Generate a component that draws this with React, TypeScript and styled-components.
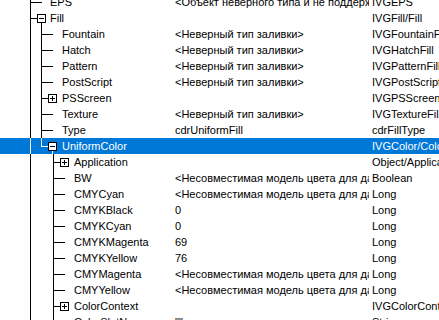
import { styled, createGlobalStyle } from "styled-components";

const GlobalStyle = createGlobalStyle`
  html, body {
    margin: 0;
    padding: 0;
    background: #ffffff;
  }
  body {
    font-family: "Liberation Sans", Arial, sans-serif;
    font-size: 11px;
  }
`;

type NodeKind = "leaf" | "open" | "closed";

type Row = {
  name: string;
  value: string;
  type: string;
  level: 1 | 2 | 3;
  node: NodeKind;
  last?: boolean;
  rails: number[];
  selected?: boolean;
};

const BAD_FILL = "<Неверный тип заливки>";
const BAD_MODEL = "<Несовместимая модель цвета для данной операции>";

const rows: Row[] = [
  { name: "EPS", value: "<Объект неверного типа и не поддерживается>", type: "IVGEPS", level: 1, node: "leaf", rails: [] },
  { name: "Fill", value: "", type: "IVGFill/Fill", level: 1, node: "open", rails: [] },
  { name: "Fountain", value: BAD_FILL, type: "IVGFountainFill", level: 2, node: "leaf", rails: [1] },
  { name: "Hatch", value: BAD_FILL, type: "IVGHatchFill", level: 2, node: "leaf", rails: [1] },
  { name: "Pattern", value: BAD_FILL, type: "IVGPatternFill", level: 2, node: "leaf", rails: [1] },
  { name: "PostScript", value: BAD_FILL, type: "IVGPostScriptFill", level: 2, node: "leaf", rails: [1] },
  { name: "PSScreen", value: "", type: "IVGPSScreen", level: 2, node: "closed", rails: [1] },
  { name: "Texture", value: BAD_FILL, type: "IVGTextureFill", level: 2, node: "leaf", rails: [1] },
  { name: "Type", value: "cdrUniformFill", type: "cdrFillType", level: 2, node: "leaf", rails: [1] },
  { name: "UniformColor", value: "", type: "IVGColor/Color", level: 2, node: "open", last: true, rails: [1], selected: true },
  { name: "Application", value: "", type: "Object/Application", level: 3, node: "closed", rails: [1] },
  { name: "BW", value: BAD_MODEL, type: "Boolean", level: 3, node: "leaf", rails: [1] },
  { name: "CMYCyan", value: BAD_MODEL, type: "Long", level: 3, node: "leaf", rails: [1] },
  { name: "CMYKBlack", value: "0", type: "Long", level: 3, node: "leaf", rails: [1] },
  { name: "CMYKCyan", value: "0", type: "Long", level: 3, node: "leaf", rails: [1] },
  { name: "CMYKMagenta", value: "69", type: "Long", level: 3, node: "leaf", rails: [1] },
  { name: "CMYKYellow", value: "76", type: "Long", level: 3, node: "leaf", rails: [1] },
  { name: "CMYMagenta", value: BAD_MODEL, type: "Long", level: 3, node: "leaf", rails: [1] },
  { name: "CMYYellow", value: BAD_MODEL, type: "Long", level: 3, node: "leaf", rails: [1] },
  { name: "ColorContext", value: "", type: "IVGColorContext", level: 3, node: "closed", rails: [1] },
  { name: "ColorSlotName", value: '""', type: "String", level: 3, node: "leaf", rails: [1] },
];

// pixel column of the vertical tree line for each level
const LINE_X: Record<number, number> = { 1: 30, 2: 41, 3: 53 };

const Viewport = styled.div`
  width: 439px;
  height: 320px;
  overflow: hidden;
  background: #ffffff;
`;

const List = styled.div`
  display: flex;
  flex-direction: column;
  margin-top: -6px;
`;

const StyledRow = styled.div<{ $selected?: boolean }>`
  display: flex;
  height: 16px;
  line-height: 16px;
  white-space: nowrap;
  background: ${({ $selected }) => ($selected ? "#0078d7" : "transparent")};
  color: ${({ $selected }) => ($selected ? "#ffffff" : "#000000")};
`;

const NameCell = styled.div`
  flex: none;
  width: 172px;
  display: flex;
  overflow: hidden;
`;

const Connectors = styled.svg`
  flex: none;
  display: block;
`;

const Label = styled.span`
  margin-left: 2px;
`;

const ValueCell = styled.div`
  flex: none;
  width: 194px;
  padding-left: 3px;
  overflow: hidden;
`;

const TypeCell = styled.div`
  flex: 1;
  padding-left: 3px;
  overflow: hidden;
`;

const TreeLines = ({ row }: { row: Row }) => {
  const width = 36 + 12 * row.level;
  const ink = row.selected ? "#ffffff" : "#000000";
  const x = LINE_X[row.level] + 0.5;
  const boxLeft = LINE_X[row.level] + 7;
  const hasBox = row.node !== "leaf";
  const hEnd = hasBox ? boxLeft : LINE_X[row.level] + 12;
  const cx = boxLeft + 4.5;

  return (
    <Connectors width={width} height={16} shapeRendering="crispEdges">
      {row.rails.map((lvl) => (
        <line key={lvl} x1={LINE_X[lvl] + 0.5} y1={0} x2={LINE_X[lvl] + 0.5} y2={16} stroke={ink} />
      ))}
      <line x1={x} y1={0} x2={x} y2={row.last ? 8.5 : 16} stroke={ink} />
      <line x1={x} y1={8.5} x2={hEnd} y2={8.5} stroke={ink} />
      {hasBox && (
        <>
          <rect x={boxLeft + 0.5} y={4.5} width={8} height={8} fill="#ffffff" stroke="#000000" />
          <line x1={boxLeft + 2} y1={8.5} x2={boxLeft + 7} y2={8.5} stroke="#000000" />
          {row.node === "closed" && (
            <line x1={cx} y1={6} x2={cx} y2={11} stroke="#000000" />
          )}
          {row.node === "open" && (
            <line x1={cx} y1={13} x2={cx} y2={16} stroke={ink} />
          )}
        </>
      )}
    </Connectors>
  );
};

const App = () => {
  return (
    <>
      <GlobalStyle />
      <Viewport>
        <List>
          {rows.map((row) => (
            <StyledRow key={row.name} $selected={row.selected}>
              <NameCell>
                <TreeLines row={row} />
                <Label>{row.name}</Label>
              </NameCell>
              <ValueCell>{row.value}</ValueCell>
              <TypeCell>{row.type}</TypeCell>
            </StyledRow>
          ))}
        </List>
      </Viewport>
    </>
  );
};

export default App;
